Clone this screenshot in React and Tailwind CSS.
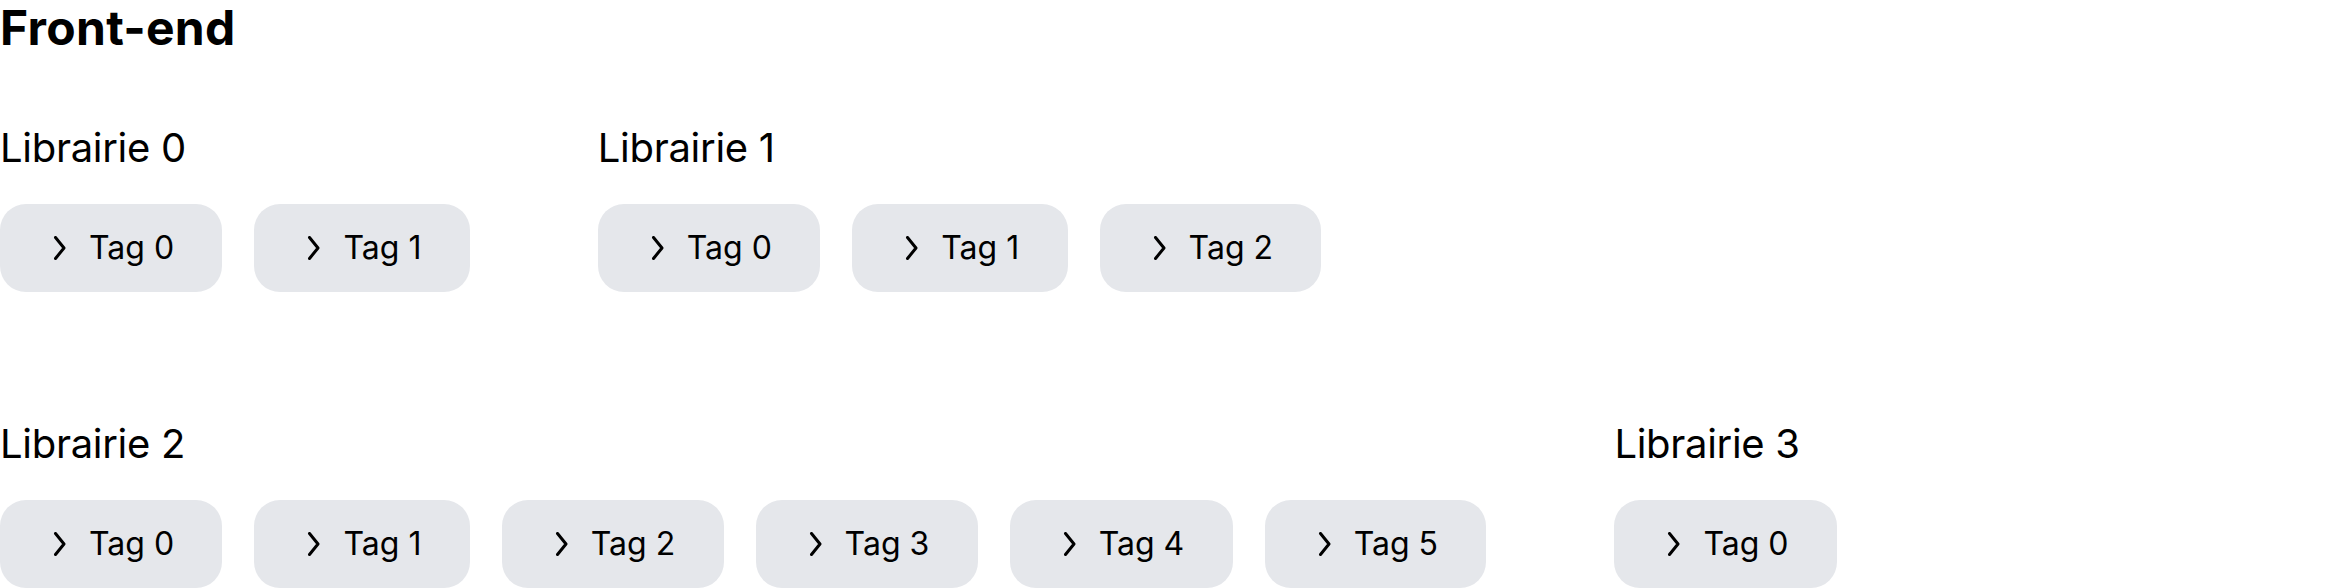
const libraries = [
  { name: 'Librairie 0', tags: 2 },
  { name: 'Librairie 1', tags: 3 },
  { name: 'Librairie 2', tags: 6 },
  { name: 'Librairie 3', tags: 1 },
];

function Chevron() {
  return (
    <svg width="24" height="24" viewBox="0 0 24 24" fill="none" className="shrink-0">
      <polyline
        points="7.5,1.5 16,12 7.5,22.5"
        stroke="#000"
        strokeWidth="3"
        strokeLinecap="round"
        strokeLinejoin="round"
      />
    </svg>
  );
}

function Tag({ label }) {
  return (
    <div className="flex h-[88px] items-center gap-[17px] rounded-[26px] bg-[#e5e7eb] pl-12 pr-[48.4px]">
      <Chevron />
      <span className="text-[32px] leading-none text-black">{label}</span>
    </div>
  );
}

function Library({ name, tags }) {
  return (
    <div className="flex flex-col gap-8">
      <h2 className="text-[40px] leading-[48px] font-normal tracking-[-0.3px] text-black">{name}</h2>
      <div className="flex gap-8">
        {Array.from({ length: tags }).map((_, i) => (
          <Tag key={i} label={`Tag ${i}`} />
        ))}
      </div>
    </div>
  );
}

export default function App() {
  return (
    <div className="min-h-[588px] bg-white font-['Inter',sans-serif] text-black">
      <h1 className="text-[48px] leading-[56px] font-bold tracking-[0.3px]">Front-end</h1>
      <div className="mt-[68px] flex flex-wrap gap-32">
        {libraries.map((lib) => (
          <Library key={lib.name} name={lib.name} tags={lib.tags} />
        ))}
      </div>
    </div>
  );
}
